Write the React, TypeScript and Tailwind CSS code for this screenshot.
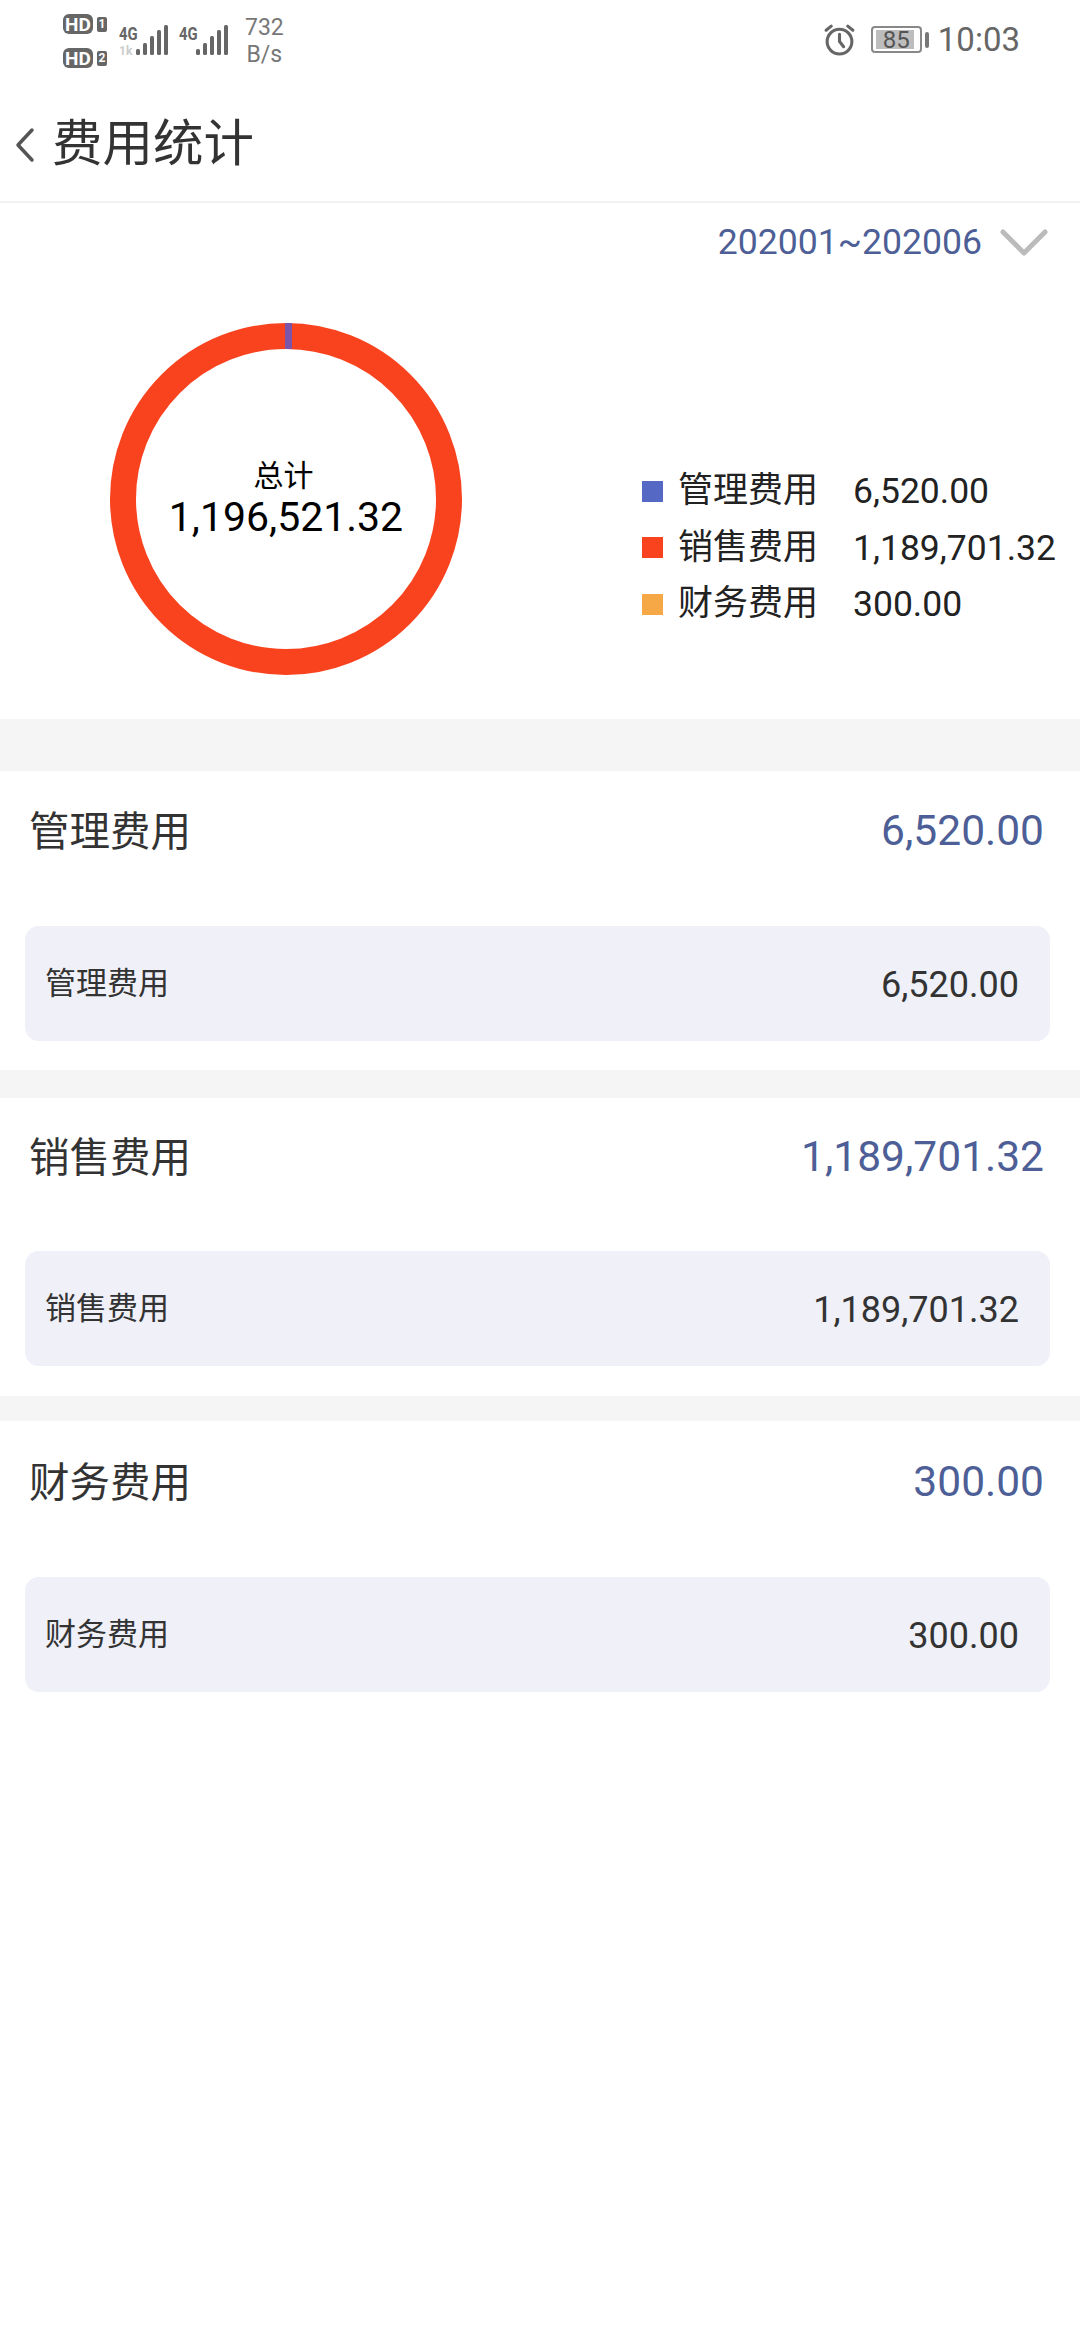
import { Fragment } from 'react';

const legend = [
  { label: '管理费用', value: '6,520.00', color: 'bg-[#5468c4]' },
  { label: '销售费用', value: '1,189,701.32', color: 'bg-[#f9431f]' },
  { label: '财务费用', value: '300.00', color: 'bg-[#f5a845]' },
];

function SignalBars() {
  return (
    <svg width="32" height="32" viewBox="0 0 32 32" fill="#666">
      <rect x="0" y="24" width="4" height="6" rx="1.5" />
      <rect x="7" y="18" width="4" height="12" rx="1.5" />
      <rect x="14" y="11" width="4" height="19" rx="1.5" />
      <rect x="21" y="5" width="4" height="25" rx="1.5" />
      <rect x="28" y="0" width="4" height="30" rx="1.5" />
    </svg>
  );
}

function SimBadge({ n }: { n: string }) {
  return (
    <div className="flex items-center gap-[4px]">
      <span className="flex h-[20px] w-[30px] items-center justify-center rounded-[6px] bg-[#666] text-[19px] font-bold leading-none text-white">
        HD
      </span>
      <span className="flex h-[15px] w-[10px] items-center justify-center rounded-[2px] bg-[#666] text-[12px] font-bold leading-none text-white">
        {n}
      </span>
    </div>
  );
}

function StatusBar() {
  return (
    <div className="flex h-[80px] items-start justify-between pl-[63px] pr-[60px] text-[#666]">
      <div className="flex items-start">
        <div className="mt-[14px] flex flex-col gap-[14px]">
          <SimBadge n="1" />
          <SimBadge n="2" />
        </div>
        <div className="relative ml-[12px] mt-[25px] flex items-start">
          <span className="w-[17px] origin-left scale-x-[0.78] text-[19px] font-bold leading-[18px]">4G</span>
          <span className="absolute left-0 top-[20px] text-[12px] font-bold leading-none text-[#ccc]">1k</span>
          <SignalBars />
        </div>
        <div className="ml-[11px] mt-[25px] flex items-start">
          <span className="w-[17px] origin-left scale-x-[0.78] text-[19px] font-bold leading-[18px]">4G</span>
          <SignalBars />
        </div>
        <div className="ml-[17px] mt-[14px] flex flex-col items-center text-[23px] leading-[27px] text-[#777]">
          <span>732</span>
          <span>B/s</span>
        </div>
      </div>
      <div className="mt-[23px] flex items-center">
        <svg width="33" height="33" viewBox="0 0 32 32" fill="none" stroke="#666" strokeWidth="3" strokeLinecap="round">
          <circle cx="16" cy="18" r="12" />
          <path d="M16 11v7l4 5" />
          <path d="M3 7l5-4M29 7l-5-4" />
        </svg>
        <div className="relative ml-[15px] flex h-[27px] w-[51px] items-center justify-center rounded-[4px] border-2 border-[#888]">
          <div className="absolute inset-y-[2px] left-[3px] right-[6px] bg-[#bdbdbd]" />
          <span className="relative text-[24px] leading-none text-[#555]">85</span>
        </div>
        <div className="ml-[3px] h-[16px] w-[4px] rounded-[2px] bg-[#777]" />
        <span className="ml-[9px] text-[33px] leading-none">10:03</span>
      </div>
    </div>
  );
}

function Donut() {
  return (
    <div className="relative h-[352px] w-[352px]">
      <svg width="352" height="352" viewBox="0 0 352 352">
        <circle cx="176" cy="176" r="163" fill="none" stroke="#f9431f" strokeWidth="26" />
        <rect x="175" y="0" width="7" height="26" fill="#7a55a8" />
      </svg>
      <div className="absolute inset-0 flex flex-col items-center justify-center pt-[1px] text-black">
        <span className="mr-[5px] text-[30px] leading-[35px]">总计</span>
        <span className="text-[41px] leading-[48px]">1,196,521.32</span>
      </div>
    </div>
  );
}

function CostSection({ label, value, headClass, boxClass }: { label: string; value: string; headClass: string; boxClass: string }) {
  return (
    <section className={`bg-white pl-[25px] pr-[30px] ${boxClass}`}>
      <div className={`flex items-center justify-between pl-[4px] pr-[6px] ${headClass}`}>
        <span className="mt-[2px] text-[40.5px] text-[#333]">{label}</span>
        <span className="text-[42.5px] text-[#4d5f96]">{value}</span>
      </div>
      <div className="flex h-[115px] items-center justify-between rounded-[14px] bg-[#eff0f8] pl-[20px] pr-[31px] pt-[2px] text-[#333]">
        <span className="text-[31px]">{label}</span>
        <span className="text-[36px]">{value}</span>
      </div>
    </section>
  );
}

export default function App() {
  return (
    <div className="min-h-[2340px] bg-white font-['Roboto','Noto_Sans_CJK_SC',sans-serif]">
      <StatusBar />
      <header className="flex h-[123px] items-center border-b-2 border-[#f2f2f2] pl-[15px] pt-[8px]">
        <svg width="20" height="36" viewBox="0 0 20 36" fill="none" stroke="#555" strokeWidth="3.5" strokeLinecap="round" strokeLinejoin="round">
          <path d="M17 3L3 18l14 15" />
        </svg>
        <h1 className="ml-[17px] text-[50.5px] font-normal leading-none text-[#333]">费用统计</h1>
      </header>

      <div className="h-[516px]">
        <div className="flex h-[80px] items-center justify-end pr-[32px]">
          <span className="text-[35.6px] text-[#4d5f96]">202001~202006</span>
          <svg className="ml-[18px]" width="48" height="28" viewBox="0 0 48 28" fill="none" stroke="#bbb" strokeWidth="5" strokeLinecap="round" strokeLinejoin="round">
            <path d="M3 3l21 21L45 3" />
          </svg>
        </div>
        <div className="mt-[40px] flex pl-[110px]">
          <Donut />
          <div className="ml-[180px] mt-[140px] grid h-fit grid-cols-[21px_140px_auto] items-center gap-x-[15px] text-[#222]">
            {legend.map((row) => (
              <Fragment key={row.label}>
                <span className={`h-[21px] w-[21px] ${row.color}`} />
                <span className="text-[35px] leading-[56.5px]">{row.label}</span>
                <span className="ml-[20px] text-[35.5px] leading-[56.5px]">{row.value}</span>
              </Fragment>
            ))}
          </div>
        </div>
      </div>

      <div className="h-[52px] bg-[#f5f5f5]" />
      <CostSection label="管理费用" value="6,520.00" headClass="h-[155px] pb-[35px]" boxClass="pb-[29px]" />
      <div className="h-[28px] bg-[#f5f5f5]" />
      <CostSection label="销售费用" value="1,189,701.32" headClass="h-[153px] pb-[35px]" boxClass="pb-[30px]" />
      <div className="h-[25px] bg-[#f5f5f5]" />
      <CostSection label="财务费用" value="300.00" headClass="h-[156px] pb-[34px]" boxClass="pb-[30px]" />
    </div>
  );
}
